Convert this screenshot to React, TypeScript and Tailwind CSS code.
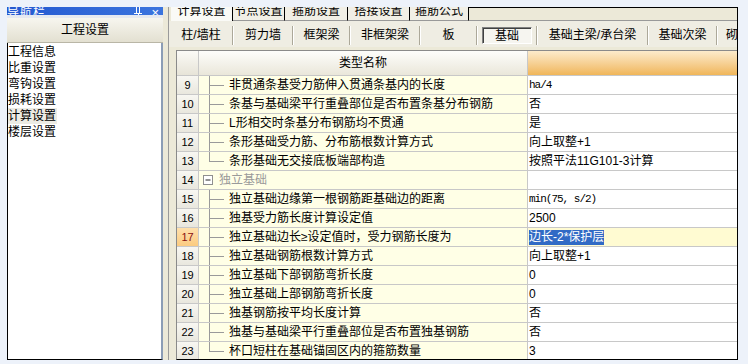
import React from "react";

type Row = {
  n: number;
  name: string;
  value?: string;
  mono?: boolean;
  group?: boolean;
  last?: boolean;
  selected?: boolean;
};

const ROWS: Row[] = [
  { n: 9, name: "非贯通条基受力筋伸入贯通条基内的长度", value: "ha/4", mono: true },
  { n: 10, name: "条基与基础梁平行重叠部位是否布置条基分布钢筋", value: "否" },
  { n: 11, name: "L形相交时条基分布钢筋均不贯通", value: "是" },
  { n: 12, name: "条形基础受力筋、分布筋根数计算方式", value: "向上取整+1" },
  { n: 13, name: "条形基础无交接底板端部构造", value: "按照平法11G101-3计算", last: true },
  { n: 14, name: "独立基础", group: true },
  { n: 15, name: "独立基础边缘第一根钢筋距基础边的距离", value: "min(75, s/2)", mono: true },
  { n: 16, name: "独基受力筋长度计算设定值", value: "2500" },
  { n: 17, name: "独立基础边长≥设定值时，受力钢筋长度为", value: "边长-2*保护层", selected: true },
  { n: 18, name: "独立基础钢筋根数计算方式", value: "向上取整+1" },
  { n: 19, name: "独立基础下部钢筋弯折长度", value: "0" },
  { n: 20, name: "独立基础上部钢筋弯折长度", value: "0" },
  { n: 21, name: "独基钢筋按平均长度计算", value: "否" },
  { n: 22, name: "独基与基础梁平行重叠部位是否布置独基钢筋", value: "否" },
  { n: 23, name: "杯口短柱在基础锚固区内的箍筋数量", value: "3", last: true },
];

const NAV = ["工程信息", "比重设置", "弯钩设置", "损耗设置", "计算设置", "楼层设置"];

const TOP_TABS = [
  { label: "计算设置", w: "w-[62px]", active: true },
  { label: "节点设置", w: "w-[52px]" },
  { label: "箍筋设置", w: "w-[63px]" },
  { label: "搭接设置", w: "w-[62px]" },
  { label: "箍筋公式", w: "w-[59px]" },
];

const SUB_TABS = [
  { label: "柱/墙柱", w: "w-[64px]" },
  { label: "剪力墙", w: "w-[60px]" },
  { label: "框架梁", w: "w-[57px]" },
  { label: "非框架梁", w: "w-[70px]" },
  { label: "板", w: "w-[57px]" },
  { label: "基础", w: "w-[60px]", active: true },
  { label: "基础主梁/承台梁", w: "w-[111px]" },
  { label: "基础次梁", w: "w-[69px]" },
  { label: "砌", w: "w-[30px]", cut: true },
];

function Tree({ last }: { last?: boolean }) {
  return (
    <svg width="28" height="18" className="shrink-0">
      <g stroke="#9a9a9a" strokeWidth="1">
        <line x1="10.5" y1="0" x2="10.5" y2={last ? 9 : 18} />
        <line x1="10" y1="9.5" x2="25" y2="9.5" />
      </g>
    </svg>
  );
}

function GroupBox() {
  return (
    <svg width="20" height="18" className="shrink-0">
      <rect x="4.5" y="4.5" width="9" height="9" fill="#fff" stroke="#8f8f8f" />
      <line x1="6.5" y1="9" x2="11.5" y2="9" stroke="#222" />
    </svg>
  );
}

export default function App() {
  return (
    <div className="w-[748px] h-[364px] overflow-hidden bg-[#EDF2FA] pt-[7px] pl-[7px] flex font-['Liberation_Sans','Noto_Sans_CJK_SC',sans-serif] text-[12px] leading-[14px] text-black">
      {/* left nav panel */}
      <div className="w-[156px] h-[353px] flex flex-col shrink-0">
        <div className="h-[8px] bg-gradient-to-r from-[#2458D0] to-[#3B74DE] flex items-end justify-between overflow-hidden text-white">
          <span className="mb-[-5px] tracking-[1px]">导航栏</span>
          <div className="flex items-end gap-[8px] pr-[4px] mb-[-4px]">
            <svg width="10" height="12" viewBox="0 0 10 12">
              <g stroke="#fff" strokeWidth="1">
                <line x1="1" y1="6.5" x2="9" y2="6.5" />
                <line x1="3.5" y1="0" x2="3.5" y2="6" />
                <line x1="6.5" y1="0" x2="6.5" y2="6" />
                <line x1="5.5" y1="7" x2="5.5" y2="12" />
              </g>
            </svg>
            <span className="text-[13px] leading-[12px]">×</span>
          </div>
        </div>
        <div className="h-[3px] bg-[#E6E9F0]" />
        <div className="h-[25px] bg-gradient-to-b from-[#F7F6EF] to-[#E3E0D1] border-b border-[#B9B6A6] flex items-center justify-center shrink-0">
          工程设置
        </div>
        <div className="flex-1 bg-white border-l border-b border-black border-r-[#8C9DB6] border-r-2 pt-[1px] flex flex-col items-start">
          {NAV.map((t) => (
            <div
              key={t}
              className={
                "h-[16px] leading-[16px] pr-[1px] " + (t === "计算设置" ? "bg-[#ECEBE4]" : "")
              }
            >
              {t}
            </div>
          ))}
        </div>
      </div>

      {/* splitter */}
      <div className="w-[5px] h-[353px] bg-[#ECE9D8] shrink-0" />

      {/* right panel */}
      <div className="w-[570px] h-[353px] flex flex-col bg-[#ECE9D8] border-l border-[#9a9a9a] border-r border-r-black shrink-0">
        {/* top tabs */}
        <div className="h-[14px] flex overflow-hidden pl-[2px] shrink-0">
          {TOP_TABS.map((t) => (
            <div
              key={t.label}
              className={
                t.w +
                " h-[14px] border-r border-black flex justify-center overflow-hidden shrink-0 " +
                (t.active ? "bg-[#FAFAF6]" : "bg-[#F1EFE6] border-b border-b-[#999]")
              }
            >
              <span className="mt-[-3px] leading-[14px]">{t.label}</span>
            </div>
          ))}
          <div className="flex-1 border-t border-black bg-[#ECE9D8] border-b border-b-[#999]" />
        </div>

        {/* sub tabs */}
        <div className="h-[26px] flex items-center pl-[1px] shrink-0 bg-[#EFEDE3]">
          {SUB_TABS.map((t, i) => (
            <div key={t.label} className={t.w + " h-[26px] flex items-center shrink-0 overflow-hidden"}>
              <div className={"flex-1 flex items-center " + (t.cut ? "justify-start pl-[8px]" : "justify-center")}>
                {t.active ? (
                  <span className="px-[12px] h-[17px] leading-[17px] mt-[2px] bg-[#F6F5F0] border border-t-[#808080] border-l-[#808080] border-b-white border-r-white shadow-[inset_1px_1px_0_#404040]">
                    {t.label}
                  </span>
                ) : (
                  <span className="mt-[1px]">{t.label}</span>
                )}
              </div>
              {i < SUB_TABS.length - 1 && (
                <div className="w-[2px] h-[19px] mt-[2px] border-l border-[#ACA899] border-r border-r-white shrink-0" />
              )}
            </div>
          ))}
        </div>

        <div className="h-[3px] shrink-0" />

        {/* table */}
        <div className="ml-[7px] flex-1 bg-white border-l border-t border-[#8a8a8a] border-b border-b-black overflow-hidden flex flex-col">
          <div className="h-[25px] flex border-b border-[#C8C8C8] shrink-0">
            <div className="w-[22px] bg-gradient-to-b from-[#FBFAF6] to-[#E7E4D8] border-r border-[#C8C8C8]" />
            <div className="w-[329px] bg-gradient-to-b from-[#FDFDFB] to-[#EAE7DA] border-r border-[#C8C8C8] flex items-center justify-center">
              类型名称
            </div>
            <div className="flex-1 bg-gradient-to-b from-[#FCEBCB] to-[#F0B658]" />
          </div>

          {ROWS.map((r) => (
            <div key={r.n} className="h-[19px] flex border-b border-[#C8C8C8] shrink-0">
              <div
                className={
                  "w-[22px] border-r border-[#C8C8C8] flex items-center justify-center text-[11px] " +
                  (r.selected
                    ? "bg-gradient-to-b from-[#FFE0AC] to-[#FBCB80] text-[#8A1010]"
                    : "bg-gradient-to-b from-[#F8F7F2] to-[#E9E7DE]")
                }
              >
                {r.n}
              </div>
              <div className="w-[329px] bg-[#FFFFE6] border-r border-[#C8C8C8] flex items-center overflow-hidden whitespace-nowrap">
                {r.group ? (
                  <>
                    <GroupBox />
                    <span className="text-[#9a9a9a]">{r.name}</span>
                  </>
                ) : (
                  <>
                    <Tree last={r.last} />
                    <span className="pl-[2px]">{r.name}</span>
                  </>
                )}
              </div>
              <div
                className={
                  "flex-1 flex items-center pl-[1px] whitespace-nowrap " +
                  (r.selected ? "bg-[#FFFBD2]" : "bg-white")
                }
              >
                {r.value &&
                  (r.selected ? (
                    <span className="bg-[#316AC5] text-white h-[15px] leading-[15px]">{r.value}</span>
                  ) : r.mono ? (
                    <span className="font-['Liberation_Mono',monospace] text-[11px] tracking-[-1px]">{r.value}</span>
                  ) : (
                    <span>{r.value}</span>
                  ))}
              </div>
            </div>
          ))}
        </div>
      </div>
    </div>
  );
}
